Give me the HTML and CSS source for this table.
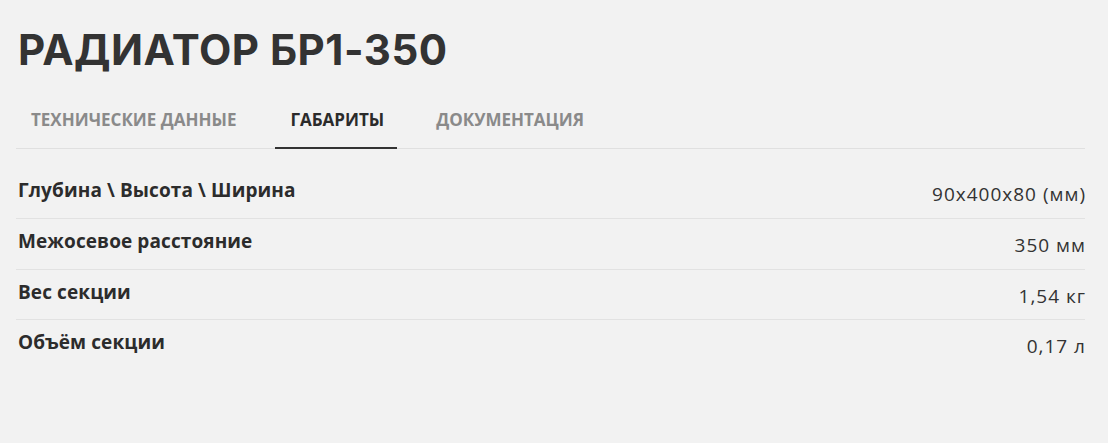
FILE: index.html
```html
<!DOCTYPE html>
<html lang="ru">
<head>
<meta charset="utf-8">
<link rel="stylesheet" href="styles.css">
</head>
<body>
<div class="page">
  <h1 class="title">РАДИАТОР БР1-350</h1>
  <nav class="tabs">
    <span class="tab">ТЕХНИЧЕСКИЕ ДАННЫЕ</span>
    <span class="tab tab-active">ГАБАРИТЫ</span>
    <span class="tab">ДОКУМЕНТАЦИЯ</span>
  </nav>
  <div class="specs">
    <div class="row"><span class="label">Глубина \ Высота \ Ширина</span><span class="value">90x400x80 (мм)</span></div>
    <div class="row"><span class="label">Межосевое расстояние</span><span class="value">350 мм</span></div>
    <div class="row"><span class="label">Вес секции</span><span class="value">1,54 кг</span></div>
    <div class="row row-last"><span class="label">Объём секции</span><span class="value">0,17 л</span></div>
  </div>
</div>
</body>
</html>
```
FILE: styles.css
```css
html, body {
  margin: 0;
  padding: 0;
  background: #f2f2f2;
}
body {
  font-family: "Open Sans", "Noto Sans", sans-serif;
  color: #333333;
}
.page {
  width: 1069px;
  padding: 24px 0 0 16px;
}
.title {
  margin: 0 0 0 2px;
  font-family: "Inter", "Liberation Sans", sans-serif;
  font-weight: 700;
  font-size: 42px;
  line-height: 52px;
  letter-spacing: 0.5px;
  color: #333333;
}
.tabs {
  display: flex;
  gap: 24px;
  margin-top: 34px;
  border-bottom: 1px solid #e0e0e0;
}
.tab {
  padding: 0 15px 17px;
  font-size: 17px;
  font-weight: 700;
  line-height: 20px;
  color: #8a8a8a;
  border-bottom: 2px solid transparent;
  margin-bottom: -1px;
}
.tab-active {
  padding-right: 13px;
  color: #2b2b2b;
  border-bottom-color: #333333;
}
.specs {
  padding-top: 20px;
}
.row {
  display: flex;
  justify-content: space-between;
  align-items: flex-start;
  border-bottom: 1px solid #e2e2e2;
  height: 50.5px;
  padding-top: 10px;
  box-sizing: border-box;
}
.row:first-child {
  height: 50px;
  padding-top: 9px;
}
.row-last {
  border-bottom: none;
}
.label {
  margin-left: 2px;
  font-size: 19px;
  font-weight: 700;
  line-height: 24px;
  letter-spacing: 0.1px;
  color: #2c2c2c;
}
.value {
  font-size: 19px;
  line-height: 24px;
  padding-top: 4px;
  letter-spacing: 1px;
  margin-right: -1px;
}
```
